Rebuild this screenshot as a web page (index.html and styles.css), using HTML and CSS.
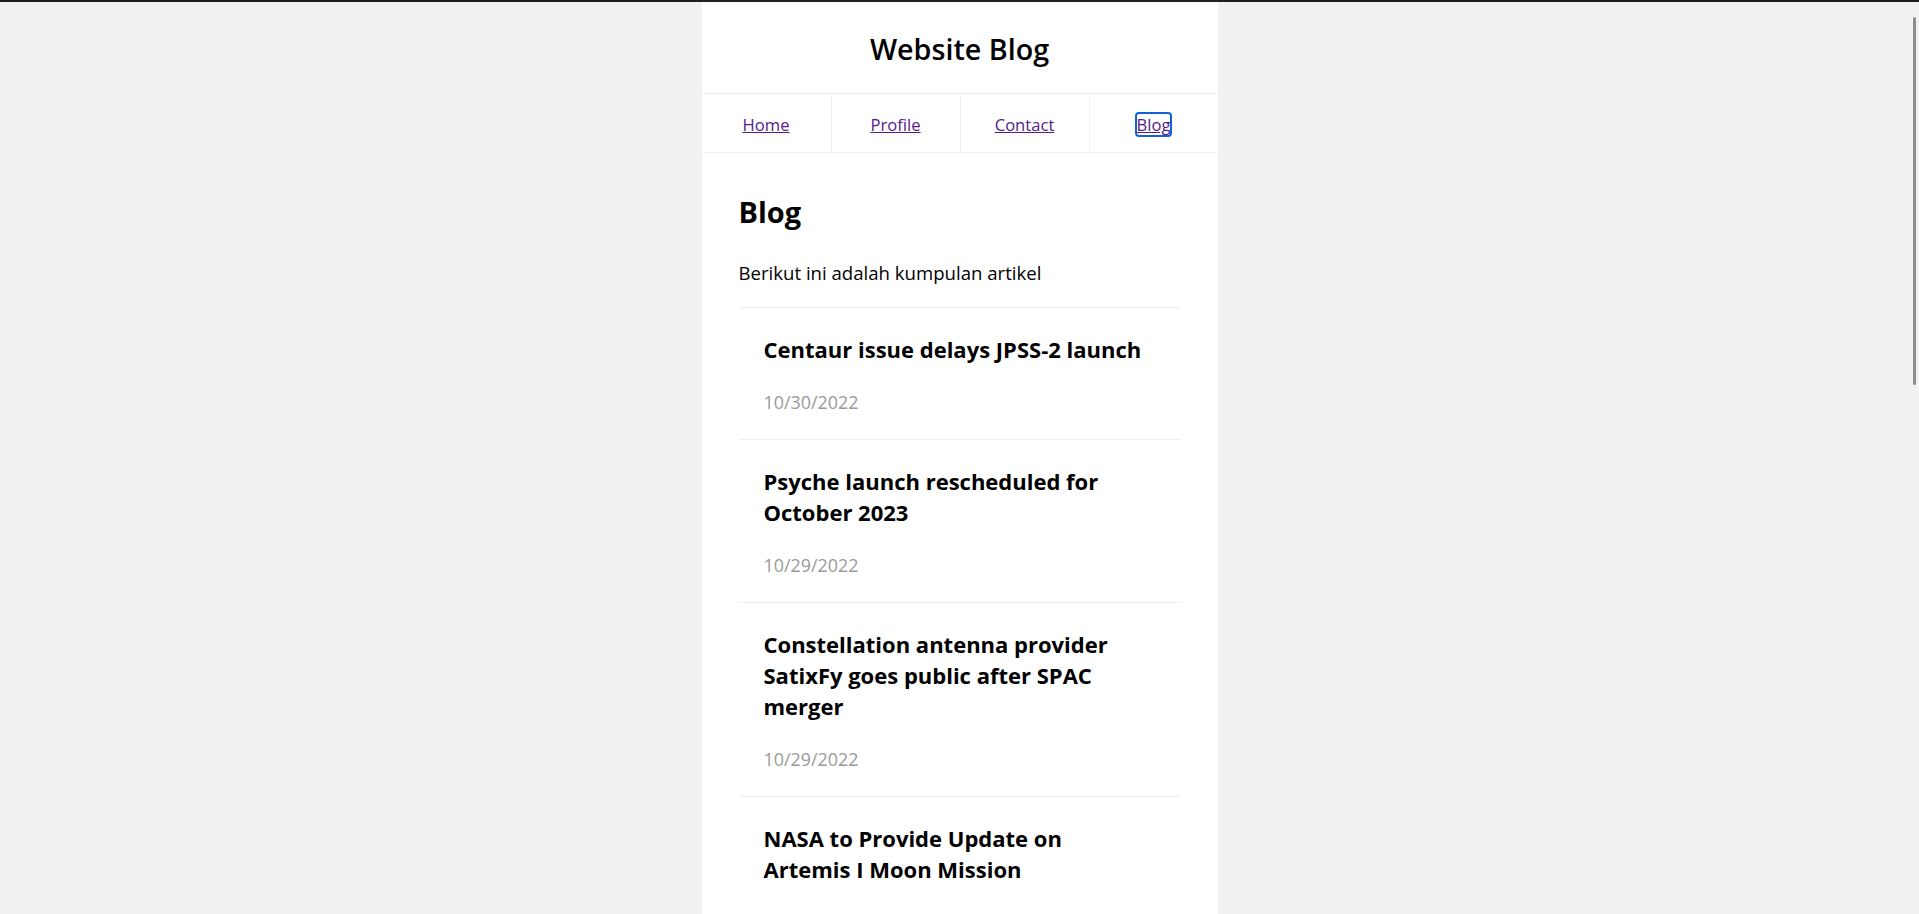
FILE: index.html
```html
<!DOCTYPE html>
<html lang="id">
<head>
<meta charset="utf-8">
<title>Website Blog</title>
<link rel="stylesheet" href="styles.css">
</head>
<body>
<div class="topbar"></div>
<div class="page">
  <header class="site-header">
    <h1 class="site-title">Website Blog</h1>
  </header>
  <nav class="nav">
    <div class="nav-cell"><a class="nav-link" href="#">Home</a></div>
    <div class="nav-cell"><a class="nav-link" href="#">Profile</a></div>
    <div class="nav-cell"><a class="nav-link" href="#">Contact</a></div>
    <div class="nav-cell"><a class="nav-link is-focused" href="#">Blog</a></div>
  </nav>
  <main class="content">
    <h2 class="content-title">Blog</h2>
    <p class="intro">Berikut ini adalah kumpulan artikel</p>
    <ul class="articles">
      <li class="article">
        <h3 class="article-title">Centaur issue delays JPSS-2 launch</h3>
        <p class="article-date">10/30/2022</p>
      </li>
      <li class="article">
        <h3 class="article-title">Psyche launch rescheduled for October 2023</h3>
        <p class="article-date">10/29/2022</p>
      </li>
      <li class="article">
        <h3 class="article-title">Constellation antenna provider SatixFy goes public after SPAC merger</h3>
        <p class="article-date">10/29/2022</p>
      </li>
      <li class="article">
        <h3 class="article-title">NASA to Provide Update on Artemis I Moon Mission</h3>
        <p class="article-date">10/28/2022</p>
      </li>
    </ul>
  </main>
</div>
<div class="scroll-thumb"></div>
</body>
</html>
```
FILE: styles.css
```css
html {
  scrollbar-width: none;
}
body {
  margin: 0;
  background: #f1f1f1;
  font-family: "Open Sans", "Noto Sans", sans-serif;
  color: #000;
}
.topbar {
  height: 2px;
  background: #1f1f1f;
}
.page {
  width: 516px;
  margin: 0 auto;
  background: #fff;
  min-height: 1400px;
}
.site-header {
  border-bottom: 1px solid #eeeeee;
  padding: 27px 0 24px;
  text-align: center;
}
.site-title {
  margin: 0;
  font-size: 28.7px;
  line-height: 40px;
  font-weight: 600;
}
.nav {
  display: grid;
  grid-template-columns: repeat(4, 1fr);
  border-bottom: 1px solid #eeeeee;
}
.nav-cell {
  box-sizing: border-box;
  height: 58px;
  padding-top: 2px;
  display: flex;
  align-items: center;
  justify-content: center;
  border-left: 1px solid #eeeeee;
}
.nav-cell:first-child {
  border-left: none;
}
.nav-link {
  display: inline-block;
  font-size: 16.6px;
  line-height: 21px;
  color: #551a8b;
  text-decoration: underline;
}
.nav-link.is-focused {
  outline: 2px solid #0f62dc;
  border-radius: 2px;
}
.content {
  padding: 39px 37px 0;
}
.content-title {
  margin: 0;
  font-size: 29px;
  line-height: 40px;
  font-weight: 700;
}
.intro {
  margin: 27px 0 21px;
  font-size: 18.6px;
  line-height: 27px;
}
.articles {
  list-style: none;
  margin: 0;
  padding: 0;
}
.article {
  border-top: 1px solid #eeeeee;
  padding: 26px 30px 23px 25px;
}
.article-title {
  margin: 0;
  font-size: 22px;
  line-height: 31px;
  font-weight: 700;
}
.article-date {
  margin: 24px 0 0;
  font-size: 17.9px;
  line-height: 27px;
  color: #9a9a9a;
}
.scroll-thumb {
  position: fixed;
  top: 17px;
  right: 3px;
  width: 3px;
  height: 368px;
  background: #8c8c8c;
  border-radius: 2px;
}
```
